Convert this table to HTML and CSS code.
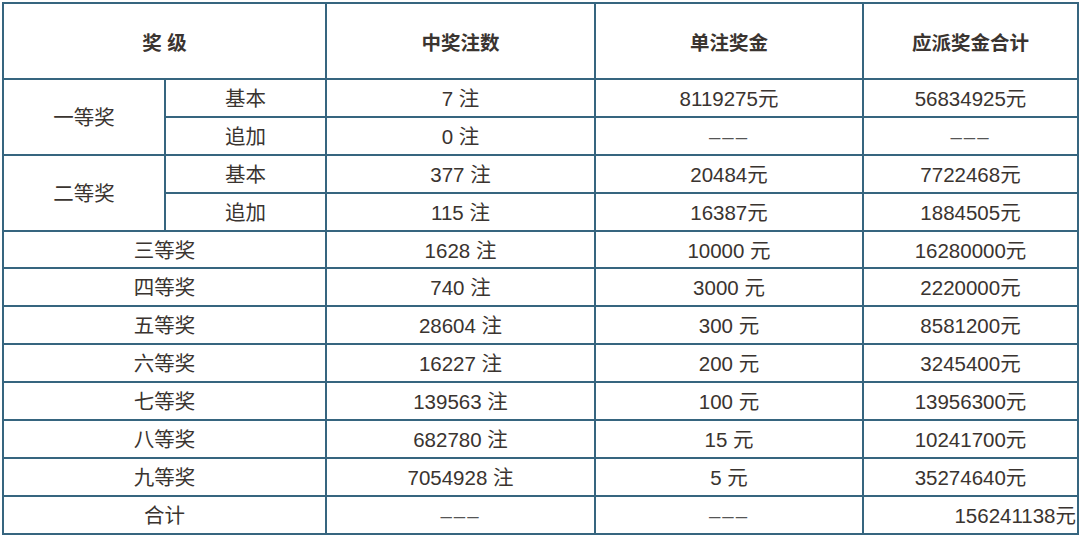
FILE: index.html
```html
<!DOCTYPE html>
<html lang="zh">
<head>
<meta charset="utf-8">
<title>开奖公告</title>
<link rel="stylesheet" href="styles.css">
</head>
<body>
<table class="prize">
  <colgroup>
    <col class="c1"><col class="c2"><col class="c3"><col class="c4"><col class="c5">
  </colgroup>
  <thead>
    <tr class="head">
      <th colspan="2">奖 级</th>
      <th>中奖注数</th>
      <th>单注奖金</th>
      <th>应派奖金合计</th>
    </tr>
  </thead>
  <tbody>
    <tr><td rowspan="2">一等奖</td><td>基本</td><td>7 注</td><td>8119275元</td><td>56834925元</td></tr>
    <tr><td>追加</td><td>0 注</td><td class="dash">–––</td><td class="dash">–––</td></tr>
    <tr><td rowspan="2">二等奖</td><td>基本</td><td>377 注</td><td>20484元</td><td>7722468元</td></tr>
    <tr><td>追加</td><td>115 注</td><td>16387元</td><td>1884505元</td></tr>
    <tr><td colspan="2">三等奖</td><td>1628 注</td><td>10000 元</td><td>16280000元</td></tr>
    <tr><td colspan="2">四等奖</td><td>740 注</td><td>3000 元</td><td>2220000元</td></tr>
    <tr><td colspan="2">五等奖</td><td>28604 注</td><td>300 元</td><td>8581200元</td></tr>
    <tr><td colspan="2">六等奖</td><td>16227 注</td><td>200 元</td><td>3245400元</td></tr>
    <tr><td colspan="2">七等奖</td><td>139563 注</td><td>100 元</td><td>13956300元</td></tr>
    <tr><td colspan="2">八等奖</td><td>682780 注</td><td>15 元</td><td>10241700元</td></tr>
    <tr><td colspan="2">九等奖</td><td>7054928 注</td><td>5 元</td><td>35274640元</td></tr>
    <tr><td colspan="2">合计</td><td class="dash">–––</td><td class="dash">–––</td><td class="right">156241138元</td></tr>
  </tbody>
</table>
</body>
</html>
```

FILE: styles.css
```css
html, body {
  margin: 0;
  padding: 0;
  background: #ffffff;
}
body {
  padding: 2px 0 0 2px;
  font-family: "Liberation Sans", "Noto Sans CJK SC", sans-serif;
  color: #3a3430;
}
.prize {
  border-collapse: collapse;
  table-layout: fixed;
  width: 1075px;
  font-size: 20.5px;
}
.c1 { width: 162px; }
.c2 { width: 161px; }
.c3 { width: 269px; }
.c4 { width: 268px; }
.c5 { width: 215px; }
.prize th,
.prize td {
  border: 2px solid #36657f;
  text-align: center;
  vertical-align: middle;
  padding: 2px 0 0 0;
  line-height: 22px;
  white-space: nowrap;
}
.prize tbody tr {
  height: 37.9px;
}
.head {
  height: 76px;
}
.head th {
  font-weight: bold;
  font-size: 19.5px;
  padding-top: 4px;
}
.dash {
  letter-spacing: 2px;
  color: #555;
}
.prize td.right {
  text-align: right;
  padding-right: 1px;
}
```
